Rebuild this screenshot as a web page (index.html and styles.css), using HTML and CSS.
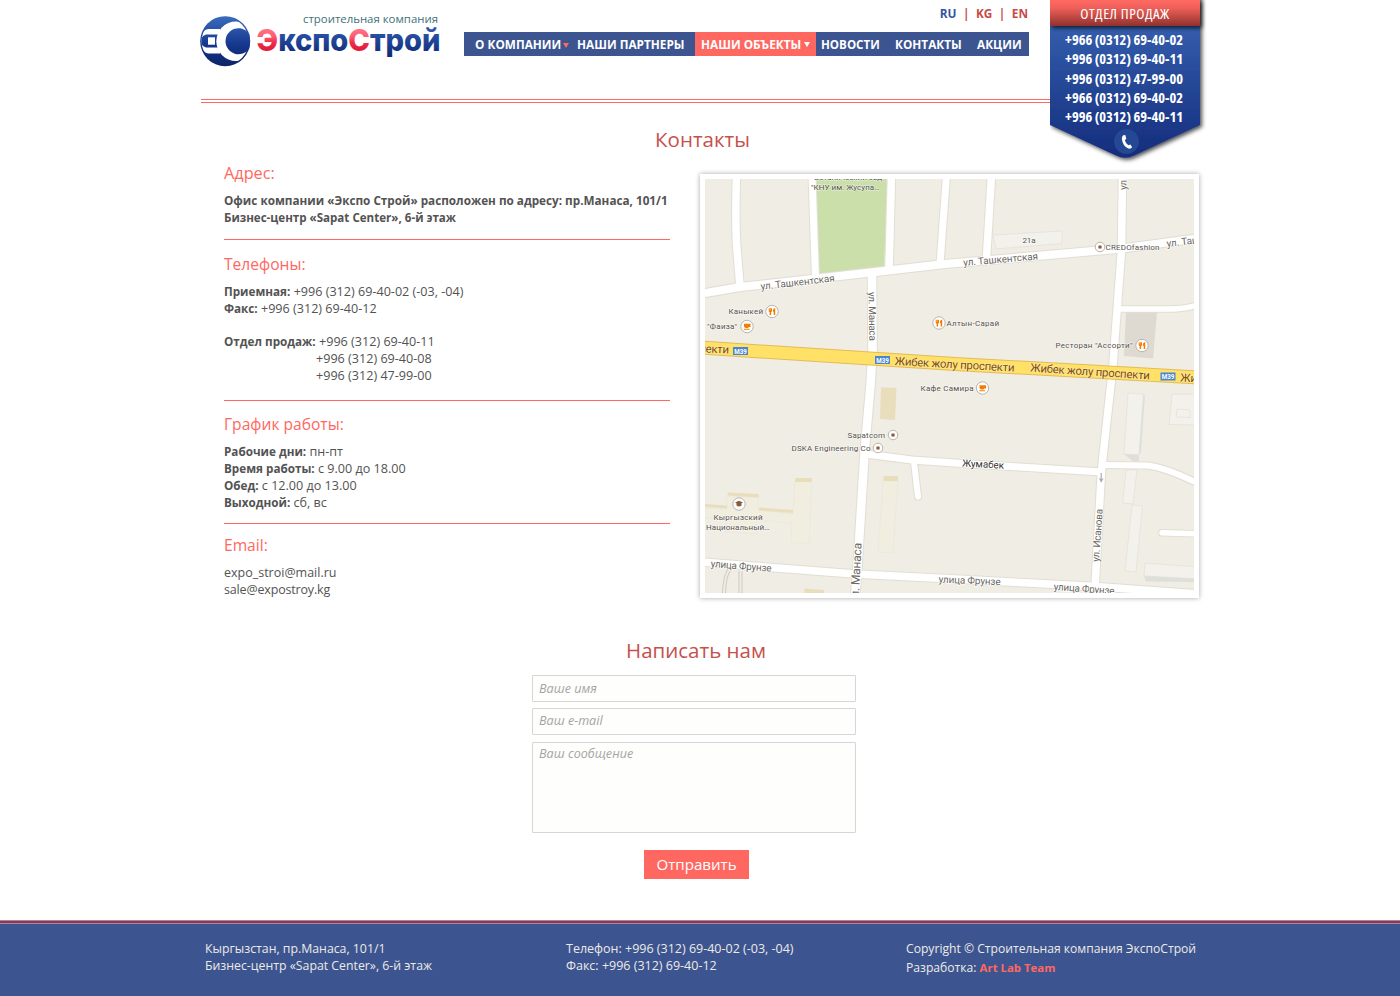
FILE: index.html
```html
<!DOCTYPE html>
<html lang="ru">
<head>
<meta charset="utf-8">
<title>ЭкспоСтрой — Контакты</title>
<link rel="stylesheet" href="styles.css">
</head>
<body>
<header class="header">
  <a class="logo" href="#">
    <svg class="logo-svg" width="244" height="58" viewBox="199 12 244 58">
      <defs>
        <linearGradient id="lb" gradientUnits="userSpaceOnUse" x1="0" y1="16" x2="0" y2="66"><stop offset="0" stop-color="#3a6cbd"/><stop offset=".6" stop-color="#14358b"/><stop offset="1" stop-color="#0c2568"/></linearGradient>
        <linearGradient id="lt" gradientUnits="userSpaceOnUse" x1="0" y1="30" x2="0" y2="56"><stop offset="0" stop-color="#2b57ab"/><stop offset="1" stop-color="#102a78"/></linearGradient>
        <linearGradient id="lr" gradientUnits="userSpaceOnUse" x1="0" y1="29" x2="0" y2="52"><stop offset="0" stop-color="#ff7385"/><stop offset=".3" stop-color="#fb6078"/><stop offset=".6" stop-color="#ee2c49"/><stop offset="1" stop-color="#de1738"/></linearGradient>
        <clipPath id="lc"><circle cx="225.2" cy="41.2" r="23.6"/></clipPath>
      </defs>
      <circle cx="225.2" cy="41.2" r="25" fill="url(#lb)"/>
      <g clip-path="url(#lc)">
        <path d="M200 41Q202 29.500 208 29H220V53.500H208Q202 53 200 41Z" fill="#fff"/>
        <path d="M200 41Q201.500 36 206 34.500H219V47.500H206Q201.500 46 200 41Z" fill="url(#lb)"/>
        <rect x="208" y="37.300" width="7" height="7.400" fill="#fff"/>
        <circle cx="236" cy="41.200" r="19.700" fill="#fff"/>
      </g>
      <path d="M249.300 34A13 13 0 1 0 249.300 48.400Q251 41.200 249.300 34Z" fill="url(#lb)"/>
      <text class="logo-tag" x="303" y="23.200" textLength="135" lengthAdjust="spacingAndGlyphs">строительная компания</text>
      <text class="logo-name" x="256.500" y="51.200" textLength="184" lengthAdjust="spacingAndGlyphs"><tspan fill="url(#lr)">Э</tspan><tspan fill="url(#lt)">кспо</tspan><tspan fill="url(#lr)">С</tspan><tspan fill="url(#lt)">трой</tspan></text>
    </svg>
  </a>
  <div class="header-main">
    <div class="langs"><a class="lang lang-on" href="#">RU</a><i>|</i><a class="lang" href="#">KG</a><i>|</i><a class="lang" href="#">EN</a></div>
    <nav class="nav">
      <a class="n1" href="#">О КОМПАНИИ<b class="caret caret-red"></b></a>
      <a class="n2" href="#">НАШИ ПАРТНЕРЫ</a>
      <a class="n3" href="#">НАШИ ОБЪЕКТЫ<b class="caret"></b></a>
      <a class="n4" href="#">НОВОСТИ</a>
      <a class="n5" href="#">КОНТАКТЫ</a>
      <a class="n6" href="#">АКЦИИ</a>
    </nav>
  </div>
  <aside class="sales">
    <svg class="sales-bg" width="160" height="170" viewBox="0 0 160 170">
      <defs>
        <linearGradient id="sb" x1="0" y1="0" x2="0" y2="1"><stop offset=".15" stop-color="#3560ae"/><stop offset="1" stop-color="#142c7c"/></linearGradient>
        <linearGradient id="sr" x1="0" y1="0" x2="0" y2="1"><stop offset="0" stop-color="#ff6a63"/><stop offset=".3" stop-color="#f0605a"/><stop offset="1" stop-color="#8f312d"/></linearGradient>
        <filter id="sh" x="-20%" y="-20%" width="140%" height="140%"><feDropShadow dx="2" dy="2" stdDeviation="2" flood-color="#000" flood-opacity=".7"/></filter>
      </defs>
      <path d="M0 -6H150V125L84 155.500Q75 160 66 155.500L0 125Z" fill="url(#sb)" filter="url(#sh)"/>
      <rect y="0" width="150" height="26" fill="url(#sr)" filter="url(#sh)"/>
      <circle cx="76.500" cy="141.500" r="12.500" fill="#254895"/>
      <path d="M73.300 135.300L75.300 135L76.300 138.800L74.800 140.200Q75.800 143.500 78.300 145.300L80.300 144.600L82.200 147.300Q80.300 149.500 77.800 148.300Q72.600 145.500 71.900 139Q71.900 136 73.300 135.300Z" fill="#fff"/>
    </svg>
    <div class="sales-body">
      <div class="sales-title">ОТДЕЛ ПРОДАЖ</div>
      <div class="sales-phones">+966 (0312) 69-40-02<br>+996 (0312) 69-40-11<br>+996 (0312) 47-99-00<br>+966 (0312) 69-40-02<br>+996 (0312) 69-40-11</div>
    </div>
  </aside>
</header>

<main class="page">
  <h1 class="title">Контакты</h1>
  <div class="columns">
    <div class="info">
      <section>
        <h2 class="h-addr">Адрес:</h2>
        <p><b class="addr1">Офис компании «Экспо Строй» расположен по адресу: пр.Манаса, 101/1</b><br><b class="addr2">Бизнес-центр «Sapat Center», 6-й этаж</b></p>
      </section>
      <section class="s-tel">
        <h2>Телефоны:</h2>
        <p><b>Приемная:</b> +996 (312) 69-40-02 (-03, -04)<br><b>Факс:</b> +996 (312) 69-40-12</p>
        <div class="sales-line"><b>Отдел продаж:</b><div><span>+996 (312) 69-40-11</span><br>+996 (312) 69-40-08<br>+996 (312) 47-99-00</div></div>
      </section>
      <section class="s-time">
        <h2>График работы:</h2>
        <p><b>Рабочие дни:</b> пн-пт<br><b>Время работы:</b> с 9.00 до 18.00<br><b>Обед:</b> с 12.00 до 13.00<br><b>Выходной:</b> сб, вс</p>
      </section>
      <section class="s-mail">
        <h2>Email:</h2>
        <p>expo_stroi@mail.ru<br><span class="mail2">sale@expostroy.kg</span></p>
      </section>
    </div>
    <div class="map">
      <svg class="map-svg" width="489" height="414" viewBox="705 179 489 414">
        <defs>
          <g id="fork"><circle r="6.200" fill="#fff" stroke="#b9b5ab"/><path d="M-3.300 -3.200V-.4Q-3.300 .4 -2.400 .6V3.400H-.9V.6Q0 .4 0 -.4V-3.200H-1V-1H-1.200V-3.200H-2.100V-1H-2.300V-3.200ZM3.200 -3.400Q.8 -3 .8 .2H1.700V3.400H3.200Z" fill="#f57c00"/></g>
          <g id="cup"><circle r="6.200" fill="#fff" stroke="#b9b5ab"/><path d="M-3 -2.700H3.500V.6H1.800Q1.500 1.600 .5 1.600H-1.200Q-2.600 1.400 -3 0ZM-3.200 2.200H2.500V3.200H-3.200Z" fill="#f57c00"/></g>
          <g id="dot"><circle r="4.800" fill="#fff" stroke="#b9b5ab"/><rect x="-1.600" y="-1.600" width="3.200" height="3.200" rx=".5" fill="#8a5a3c"/></g>
          <g id="m39"><rect width="15" height="8" fill="#4a86d0"/><text x="1.200" y="6.600" textLength="12.600" lengthAdjust="spacingAndGlyphs" class="shield">M39</text></g>
          <g id="streets" fill="none">
            <path d="M736.500 175Q735 225 737 250L740 286" stroke-width="7.500"/>
            <path d="M812 175L815.500 278" stroke-width="7"/>
            <path d="M891.500 175L889 270" stroke-width="7.500"/>
            <path d="M946.500 175L940 264" stroke-width="7"/>
            <path d="M991.500 175L986.500 258" stroke-width="7.500"/>
            <path d="M700 294L740 287L875 272L945 264L1122 248.500L1200 238" stroke-width="8"/>
            <path d="M872 272L872.500 352L870.500 385L864.500 453L857.500 567L855 597" stroke-width="8.500"/>
            <path d="M1122.500 175L1121.500 250L1113 365L1101.500 470L1095 588" stroke-width="7.500"/>
            <path d="M1118 309H1172Q1183 309 1198 305" stroke-width="5.500"/>
            <path d="M866 454L912 460L955 463L1102 472" stroke-width="7"/>
            <path d="M1105 465L1146 465.500Q1165 467 1198 483.500" stroke-width="6"/>
            <path d="M914 462L918 496.500" stroke-width="6" stroke-linecap="round"/>
            <path d="M700 562L855 574L955 579L1095 586.500L1198 594" stroke-width="7.500"/>
            <path d="M1162 532.700L1200 534" stroke-width="5.500" stroke-linecap="round"/>
          </g>
          <filter id="edge"><feMorphology in="SourceAlpha" operator="dilate" radius=".7" result="d"/><feFlood flood-color="#e2ded3"/><feComposite in2="d" operator="in"/><feMerge><feMergeNode/><feMergeNode in="SourceGraphic"/></feMerge></filter>
        </defs>
        <rect x="705" y="179" width="489" height="414" fill="#f0ede5"/>
        <path d="M815 175H888L884 270L819 278Z" fill="#cadfaa"/>
        <g fill="#f3f1eb" stroke="#e4e1d9" stroke-width=".8">
          <path d="M993 235L1062 231V243.500L996 249Z"/>
          <path d="M1128 393L1143.500 394L1139 455L1124 454Z"/>
          <path d="M1172 394H1200V425L1169 424.500Z"/><path d="M1177 409L1190 410V417.500L1176 417Z"/>
          <path d="M1126 470H1137L1133 504L1122.500 503Z"/>
          <path d="M1132 505L1142.500 506L1136 572L1125 571Z"/>
          <path d="M1145 563L1200 567V579L1144 576Z"/>
        </g>
        <path d="M1144 576L1200 579V582L1146 581.500ZM1124 454L1139 455V462L1133 461.500ZM1143.500 394L1145 396L1141 452L1139 455Z" fill="#dedfda"/>
        <path d="M1126 310L1157 312L1153 358.500L1124 356Z" fill="#ded9d1"/>
        <path d="M705 508L727 509V496L758 497V510L793 514L795 481H812L809 544L791 542L792 523L757 520L756 534L726 532V518H705ZM883 481H898L893 553L878 552Z" fill="#f1eddf" stroke="#e8e5dc" stroke-width=".6"/>
        <path d="M881 387.300L896.500 388L895 420L880 419ZM883.500 476H898V481H883.500ZM795.500 478H812L811.500 482H795ZM728 492.500L758.500 494V497.500L727.500 495.500ZM705 504L727 505.500V508.500L705 507ZM759 507.500L793 510V513L759 510.500ZM804.500 588.500L824 590V595H804Z" fill="#e8debc"/>
        <path d="M729 570Q724 578 724 596M740.500 571V596" fill="none" stroke="#cfcac0" stroke-width="4"/>
        <path d="M729 570Q724 578 724 596M740.500 571V596" fill="none" stroke="#f0ede5" stroke-width="2"/>
        <use href="#streets" stroke="#fff" filter="url(#edge)"/>
        <path d="M700 347.500L955 364L1200 377.500" fill="none" stroke="#e3bb58" stroke-width="14"/>
        <path d="M700 347.500L955 364L1200 377.500" fill="none" stroke="#ffe168" stroke-width="12"/>
        <path d="M1101.200 473V481M1099.500 478.500L1101.200 481.500L1103 478.500" fill="none" stroke="#a9b3b8" stroke-width="1.300"/>
        <g class="poi">
          <text x="814" y="180.300" textLength="68">Ботанический сад</text>
          <text x="811" y="190" textLength="68.500">"КНУ им. Жусупа…</text>
          <text x="728.500" y="313.700" textLength="34.500">Каныкей</text><use href="#fork" x="772" y="311.500"/>
          <text x="707" y="329" textLength="30">"Фаиза"</text><use href="#cup" x="747" y="326.500"/>
          <text x="946.500" y="326" textLength="52.500">Алтын-Сарай</text><use href="#fork" x="939" y="323"/>
          <text x="1055.500" y="348" textLength="77">Ресторан "Ассорти"</text><use href="#fork" x="1142" y="345.500"/>
          <text x="920.500" y="391" textLength="53">Кафе Самира</text><use href="#cup" x="982.500" y="388"/>
          <text x="847.500" y="438" textLength="37.500">Sapatcom</text><use href="#dot" x="893" y="435"/>
          <text x="791.500" y="451" textLength="79">DSKA Engineering Co</text><use href="#dot" x="878" y="448"/>
          <text x="1022.500" y="243" textLength="13">21a</text>
          <text x="1105.500" y="249.800" textLength="54">CREDOfashion</text><use href="#dot" x="1100" y="247"/>
          <circle cx="739" cy="504" r="6.200" fill="#fff" stroke="#b9b5ab"/><path d="M735 502.500L739 500.700L743 502.500L741.500 503.300V505.500Q739 507.500 736.500 505.500V503.300Z" fill="#8a5a3c"/>
          <text x="713.500" y="520" textLength="49">Кыргызский</text>
          <text x="706" y="530" textLength="63.500">Национальный…</text>
        </g>
        <g class="street">
          <text transform="translate(761 289.800) rotate(-6.500)" textLength="74.500">ул. Ташкентская</text>
          <text transform="translate(963.500 266) rotate(-5)" textLength="75">ул. Ташкентская</text>
          <text transform="translate(1167 247) rotate(-7)" textLength="75">ул. Ташкентская</text>
          <text transform="translate(868.500 292) rotate(89)" textLength="49">ул. Манаса</text>
          <text transform="translate(858.500 603) rotate(-87)" class="big" textLength="60">ул. Манаса</text>
          <text transform="translate(1126.500 190) rotate(-89)" textLength="54">ул. Исанова</text>
          <text transform="translate(1099 562) rotate(-86)" textLength="53">ул. Исанова</text>
          <text transform="translate(710.500 567) rotate(4.500)" textLength="61">улица Фрунзе</text>
          <text transform="translate(938.500 582.500) rotate(2.500)" textLength="62">улица Фрунзе</text>
          <text transform="translate(1053.500 590) rotate(4)" textLength="61">улица Фрунзе</text>
          <text transform="translate(962 466.500) rotate(3)" class="dark" textLength="42">Жумабек</text>
        </g>
        <g class="avenue">
          <text transform="translate(611 347.500) rotate(3)" textLength="118">Жибек жолу проспекти</text>
          <text transform="translate(894.500 365) rotate(3.200)" textLength="120">Жибек жолу проспекти</text>
          <text transform="translate(1030 371.500) rotate(3.800)" textLength="120">Жибек жолу проспекти</text>
          <text transform="translate(1180 381.500) rotate(3)" textLength="120">Жибек жолу проспекти</text>
        </g>
        <use href="#m39" x="733" y="347"/><use href="#m39" x="875" y="356"/><use href="#m39" x="1160.500" y="372.500"/>
      </svg>
    </div>
  </div>

  <form class="form">
    <h1 class="title title-form">Написать нам</h1>
    <input class="field" type="text" placeholder="Ваше имя">
    <input class="field field-mail" type="text" placeholder="Ваш e-mail">
    <textarea class="field field-msg" placeholder="Ваш сообщение"></textarea>
    <button class="send" type="button">Отправить</button>
  </form>
</main>

<footer class="footer">
  <div class="footer-in">
    <p class="f1">Кыргызстан, пр.Манаса, 101/1<br>Бизнес-центр «Sapat Center», 6-й этаж</p>
    <p class="f2">Телефон: +996 (312) 69-40-02 (-03, -04)<br>Факс: +996 (312) 69-40-12</p>
    <p class="f3">Copyright © Строительная компания ЭкспоСтрой<br>Разработка: <b>Art Lab Team</b></p>
  </div>
</footer>
</body>
</html>
```
FILE: styles.css
```css
*, *::after { box-sizing: border-box; margin: 0; padding: 0; }
body {
  height: 996px;
  display: flex;
  flex-direction: column;
  background: #fff;
  color: #535353;
  font: 12.6px/17px "Open Sans", "Noto Sans", sans-serif;
  overflow: hidden;
}
a { color: inherit; text-decoration: none; }

/* header */
.header {
  position: relative;
  width: 1000px;
  height: 103px;
  margin: 0 auto;
  display: flex;
}
.header::after {
  content: "";
  position: absolute;
  left: 1px;
  right: 150px;
  bottom: 0;
  height: 4px;
  border-top: 1px solid #ff6861;
  border-bottom: 1px solid #ff6861;
}
.logo { width: 264px; padding-top: 12px; }
.logo-svg { display: block; margin-left: -1px; }
.logo-tag { font: 11.5px "Open Sans", sans-serif; fill: #417078; }
.logo-name { font: 800 30.5px Inter, "Open Sans", sans-serif; }
.header-main { width: 565px; }
.langs {
  display: flex;
  justify-content: flex-end;
  height: 32px;
  padding: 5px 1px 0 0;
  font-size: 11.8px;
  font-weight: 700;
  color: #c94b47;
}
.langs i { width: 19.5px; text-align: center; font-style: normal; font-weight: 700; }
.lang-on { color: #34559f; }
.nav {
  display: flex;
  height: 24px;
  background: #3c5590;
  color: #fff;
  font-size: 11.8px;
  font-weight: 700;
  line-height: 25px;
  white-space: nowrap;
}
.n1 { width: 113px; padding-left: 11px; }
.n2 { width: 118px; }
.n3 { width: 121px; padding-left: 6px; background: #ff6861; }
.n4 { width: 79px; padding-left: 5px; font-size: 11.6px; }
.n5 { width: 82px; }
.caret {
  display: inline-block;
  margin-left: 3px;
  vertical-align: 2px;
  border: 3px solid transparent;
  border-top: 5px solid #fff;
  border-bottom: 0;
}
.caret-red { border-top-color: #ff6861; vertical-align: 1px; margin-left: 2px; }

.sales { position: absolute; left: 850px; top: 0; width: 150px; z-index: 2; }
.sales-bg { position: absolute; left: 0; top: 0; }
.sales-body {
  position: relative;
  color: #fff;
  text-align: center;
  font-stretch: 75%;
  white-space: nowrap;
}
.sales-title { height: 26px; font-size: 15px; font-weight: 500; line-height: 26px; letter-spacing: .5px; }
.sales-phones { padding: 4px 2px 0 0; font-size: 14.45px; font-weight: 700; line-height: 19.25px; }

/* content */
.page { width: 1000px; height: 817px; margin: 0 auto; }
.title {
  padding: 23px 0 0 5px;
  color: #c5514c;
  font-size: 20.5px;
  font-weight: 400;
  line-height: 26px;
  text-align: center;
}
.columns { display: flex; justify-content: space-between; padding: 11px 1px 0 24px; }
.info { width: 446px; }
.info section { border-bottom: 1px solid #ff6861; }
.info section:last-child { border: 0; }
.info section:first-child { height: 77px; }
.info .s-tel { height: 161px; padding-top: 14px; }
.info .s-time { height: 123px; padding-top: 13px; }
.info .s-mail { padding-top: 11px; }
.info h2 {
  margin-bottom: 9px;
  color: #ff6861;
  font-size: 15.6px;
  font-weight: 400;
  line-height: 20px;
}
.info .h-addr { font-size: 16.3px; }
.info b { font-size: 11.7px; white-space: nowrap; }
.info .addr1 { font-size: 11.73px; }
.info .addr2 { font-size: 11.58px; }
.s-mail p { font-size: 12.5px; }
.mail2 { letter-spacing: -.17px; }
.sales-line { display: flex; margin-top: 16px; }
.sales-line b { width: 92px; }
.sales-line span { padding-left: 3px; }

.map {
  width: 499px;
  height: 424px;
  margin-top: 11px;
  padding: 5px;
  background: #fff;
  box-shadow: 0 0 5px rgba(0, 0, 0, .35);
}
.map-svg { display: block; }
.map text { font-family: Roboto, "Open Sans", sans-serif; }
.poi text { font-size: 8px; fill: #55524e; stroke: #fff; stroke-width: 1.2px; stroke-opacity: .6; paint-order: stroke; }
.street text { font-size: 10px; fill: #6b6762; stroke: #fff; stroke-width: 1.5px; paint-order: stroke; }
.street .big { font-size: 12px; }
.street .dark { fill: #333; }
.avenue text { font-size: 11.5px; fill: #7a4c12; stroke: #ffe9a0; stroke-width: 1.2px; paint-order: stroke; }
.map .shield { font-size: 7px; font-weight: 700; fill: #fff; }

/* form */
.form { width: 324px; margin: 0 0 0 332px; display: flex; flex-direction: column; }
.title-form { padding: 39px 0 0 4px; line-height: 26px; }
.field {
  display: block;
  width: 324px;
  height: 27px;
  margin-top: 12px;
  padding: 0 6px;
  border: 1px solid #d6d6d6;
  border-radius: 1px;
  background: #fefefc;
  font: italic 12.6px/17px "Open Sans", sans-serif;
  resize: none;
  outline: 0;
}
.field::placeholder { color: #a5a5a5; opacity: 1; }
.field-mail { margin-top: 6px; padding-bottom: 2px; }
.field-msg { height: 91px; margin-top: 7px; padding-top: 2px; }
.send {
  width: 105px;
  height: 29px;
  margin: 17px 0 0 112px;
  border: 0;
  background: #ff6861;
  color: #fff;
  font: 15.1px/27px "Open Sans", sans-serif;
}

/* footer */
.footer {
  height: 76px;
  padding-top: 3px;
  border-top: 1px solid #ff6861;
  background: linear-gradient(#3c5590 2px, #ff6861 2px, #ff6861 3px, #3c5590 3px);
  color: #eceae6;
}
.footer-in { width: 1000px; margin: 0 auto; padding: 16px 0 0 5px; display: flex; white-space: nowrap; }
.f1 { width: 361px; font-size: 12.3px; }
.f2 { width: 340px; font-size: 12.5px; }
.f3 { font-size: 12.13px; line-height: 19px; margin-top: -1px; }
.f3 b { color: #ff6861; font-size: 11.4px; }
```
